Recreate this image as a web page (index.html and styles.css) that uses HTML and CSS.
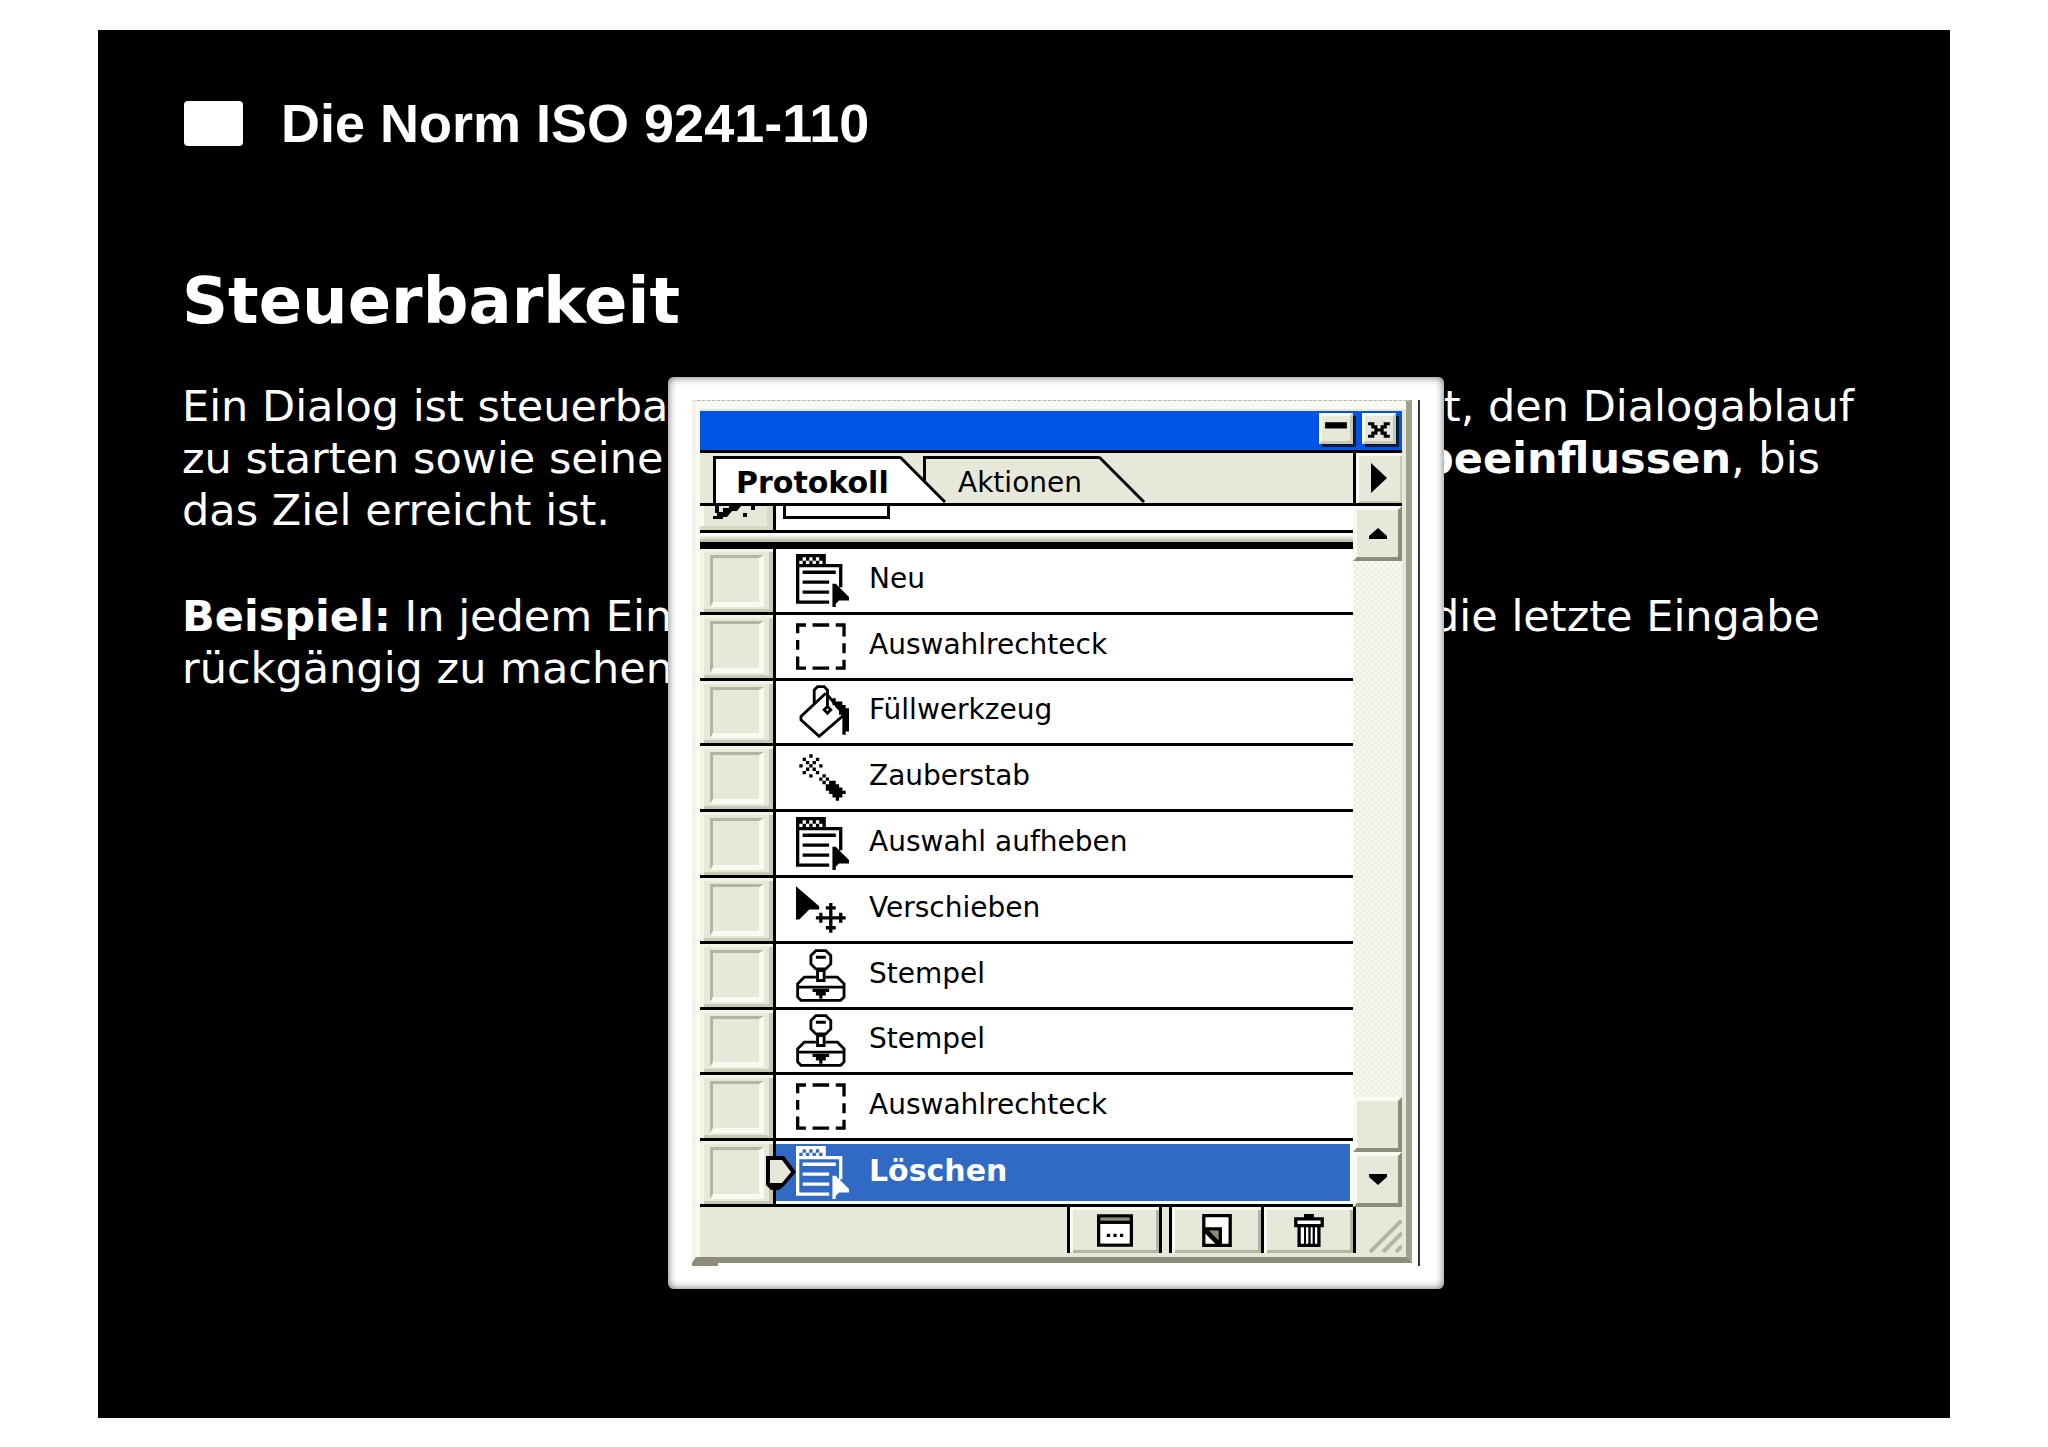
FILE: index.html
```html
<!DOCTYPE html>
<html lang="de">
<head>
<meta charset="utf-8">
<title>Die Norm ISO 9241-110</title>
<link rel="stylesheet" href="styles.css">
</head>
<body>
<svg class="sprites" aria-hidden="true">
  <symbol id="i-command" viewBox="0 0 16 16">
    <path fill="currentColor" fill-rule="evenodd" d="M0 0h9v3h5v7h-1V4H1v10h9v1H0zM2 1v1H1v1h1V2h1v1h1V2h1v1h1V2h1v1h1V2H7V1H6v1H5V1H4v1H3V1zM2 5h10v1H2zM2 8h8v1H2zM2 11h8v1H2zM11 9h1l4 4v1h-3l-1 1v1h-1z"/>
  </symbol>
  <symbol id="i-marquee" viewBox="0 0 16 16">
    <path fill="currentColor" d="M0 1h3v1H1v2H0zM5 1h5v1H5zM12 1h3v4h-1V2h-2zM0 6h1v3H0zM14 7h1v3h-1zM0 11h1v3h2v1H0zM5 14h5v1H5zM12 14h2v-2h1v3h-3z"/>
  </symbol>
  <symbol id="i-bucket" viewBox="0 0 16 16">
    <path fill="none" stroke="currentColor" stroke-width=".85" d="M5.500 5.500V1.500L6.500.500H8.500L9.500 1.500V7M9 2.500L1.500 9.500V10.500L7 15.500L14.500 9L9.500 3M9.500 6.500l1 1l-1 1l-1-1z"/>
    <path fill="currentColor" d="M11 4h1v1h2v1h1v1h1v7h-1v1h-1V9h-1V7h-1V6h-1z"/>
  </symbol>
  <symbol id="i-wand" viewBox="0 0 16 16">
    <path fill="currentColor" d="M4 1h1v1H4zM2 2h1v1H2zM6 2h1v1H6zM3 3h1v1H3zM5 3h1v1H5zM1 4h1v1H1zM4 4h1v1H4zM7 4h1v1H7zM3 5h1v1H3zM5 5h1v1H5zM2 6h1v1H2zM6 6h1v1H6zM4 7h1v1H4zM8 7h1v1H8zM7 8h1v1H7zM9 8h1v1H9zM8 9h1v1H8zM10 9h2v1h1v1h1v1h1v1h-1v1h-1v1h-1v-1h-1v-1h-1v-1H9v-2h1zM13 12h2v1h-2zM12 13h2v1h-2z"/>
  </symbol>
  <symbol id="i-move" viewBox="0 0 16 16">
    <path fill="currentColor" d="M0 1l7 6v1H4L1 11H0zM10 6h1v1h1v1h-1v2h2V9h1v1h1v1h-1v1h-1v-1h-2v2h1v1h-1v1h-1v-1H9v-1h1v-2H8v1H7v-1H6v-1h1V9h1v1h2V8H9V7h1z"/>
  </symbol>
  <symbol id="i-stamp" viewBox="0 0 16 16">
    <path fill="none" stroke="currentColor" stroke-width=".85" d="M6 .500H9L10.500 2V4.500L9 6H6L4.500 4.500V2zM6 2.500H9M6.500 6.500H8.500V9.500H6.500zM6 8.500H2.500L.500 10.500V14.500L1.500 15.500H13.500L14.500 14.500V10.500L12.500 8.500H9M.500 11.500H14.500"/>
    <path fill="currentColor" d="M5 12h5v1H9v1H8v1H7v-1H6v-1H5z"/>
  </symbol>
</svg>

<main class="slide">
  <header class="slide-header">
    <span class="bullet"></span>
    <h1 class="title">Die Norm ISO 9241-110</h1>
  </header>
  <h2 class="topic">Steuerbarkeit</h2>
  <div class="copy">
    <p>
      <span class="line"><span>Ein Dialog ist steuerbar</span> <span>ist, den Dialogablauf</span></span>
      <span class="line line-short"><span>zu starten sowie seine</span> <span><b>beeinflussen</b>, bis</span></span>
      <span class="line">das Ziel erreicht ist.</span>
    </p>
    <p>
      <span class="line line-short"><span><b>Beispiel:</b> In jedem Ein</span> <span>die letzte Eingabe</span></span>
      <span class="line">rückgängig zu machen</span>
    </p>
  </div>

  <section class="frame">
    <div class="capture">
      <div class="palette">
        <div class="titlebar">
          <button class="win-btn" type="button" aria-label="Minimieren"><svg viewBox="0 0 9 9" width="28" height="28"><path d="M1 2h7v2H1z"/></svg></button>
          <button class="win-btn" type="button" aria-label="Schließen"><svg viewBox="0 0 9 9" width="28" height="28"><path d="M1 2h2v1h1v1h1V3h1V2h2v1H7v1H6v1h1v1h1v1H6V6H5V5H4v1H3v1H1V6h1V5h1V4H2V3H1z"/></svg></button>
        </div>
        <div class="tabs" role="tablist">
          <button class="tab tab-active" type="button" role="tab" aria-selected="true">Protokoll</button>
          <svg class="slant slant-active" width="46" height="47" viewBox="0 0 46 47"><path class="slant-fill" d="M0 2L44 47H0z"/><path class="slant-line" d="M0 1L45 46"/></svg>
          <button class="tab tab-back" type="button" role="tab" aria-selected="false">Aktionen</button>
          <svg class="slant" width="46" height="47" viewBox="0 0 46 47"><path class="slant-line" d="M0 1L45 46"/></svg>
          <button class="menu-btn" type="button" aria-label="Palettenmenü"><svg width="16" height="30" viewBox="0 0 16 30"><path d="M0 0l16 15L0 30z"/></svg></button>
        </div>
        <div class="body">
          <div class="history">
            <div class="snapshot">
              <div class="brush"><svg width="44" height="14" viewBox="0 0 44 14"><path d="M2 0h4v6h4V2h6V0h12l-4 5h-5l-5 6h-4v2H0v-3h4V7H2zM38 0h4v4h-4zM30 7h4v4h-4z"/></svg></div>
              <div class="thumb-cell"><span class="thumb"></span></div>
            </div>
            <div class="divider"></div>
            <ol class="steps">
              <li class="step"><span class="well"><input type="checkbox" id="s1"></span><svg class="icon"><use href="#i-command"/></svg><label for="s1">Neu</label></li>
              <li class="step"><span class="well"><input type="checkbox" id="s2"></span><svg class="icon"><use href="#i-marquee"/></svg><label for="s2">Auswahlrechteck</label></li>
              <li class="step"><span class="well"><input type="checkbox" id="s3"></span><svg class="icon"><use href="#i-bucket"/></svg><label for="s3">Füllwerkzeug</label></li>
              <li class="step"><span class="well"><input type="checkbox" id="s4"></span><svg class="icon"><use href="#i-wand"/></svg><label for="s4">Zauberstab</label></li>
              <li class="step"><span class="well"><input type="checkbox" id="s5"></span><svg class="icon"><use href="#i-command"/></svg><label for="s5">Auswahl aufheben</label></li>
              <li class="step"><span class="well"><input type="checkbox" id="s6"></span><svg class="icon"><use href="#i-move"/></svg><label for="s6">Verschieben</label></li>
              <li class="step"><span class="well"><input type="checkbox" id="s7"></span><svg class="icon"><use href="#i-stamp"/></svg><label for="s7">Stempel</label></li>
              <li class="step"><span class="well"><input type="checkbox" id="s8"></span><svg class="icon"><use href="#i-stamp"/></svg><label for="s8">Stempel</label></li>
              <li class="step"><span class="well"><input type="checkbox" id="s9"></span><svg class="icon"><use href="#i-marquee"/></svg><label for="s9">Auswahlrechteck</label></li>
              <li class="step step-current"><span class="well"><input type="checkbox" id="s10"></span><svg class="icon"><use href="#i-command"/></svg><label for="s10">Löschen</label>
                <svg class="pointer" width="30" height="34" viewBox="0 0 30 34"><path d="M0 0h18l12 16l-12 14l-5 4H5L0 29z"/><path class="pointer-face" d="M4 4h12l9 12l-9 11H4z"/></svg></li>
            </ol>
          </div>
          <div class="scrollbar">
            <button class="scroll-btn" type="button" aria-label="Nach oben"><svg width="18" height="11" viewBox="0 0 18 11"><path d="M9 0l9 8v3H0V8z"/></svg></button>
            <div class="track"></div>
            <button class="scroll-btn" type="button" aria-label="Bildlauffeld"></button>
            <button class="scroll-btn" type="button" aria-label="Nach unten"><svg width="18" height="11" viewBox="0 0 18 11"><path d="M9 11l9-8V0H0v3z"/></svg></button>
          </div>
        </div>
        <div class="footer">
          <button class="tool tool-single" type="button" aria-label="Neues Dokument"><svg width="36" height="33" viewBox="0 0 11 10"><path d="M0 0h11v10H0z"/><path fill="#8c8c78" d="M1 1h9v1H1z"/><path fill="#fff" d="M1 3h9v6H1z"/><path d="M3 6h1v1H3zM5 6h1v1H5zM7 6h1v1H7z"/></svg></button>
          <button class="tool" type="button" aria-label="Neuer Schnappschuss"><svg width="30" height="33" viewBox="0 0 9 10"><path d="M0 0h9v10H0z"/><path fill="#fff" d="M1 1h7v8H6V4H1z"/><path fill="#8c8c78" d="M2 5h3v3z"/><path fill="#fff" d="M1 6l3 3H1z"/></svg></button>
          <button class="tool" type="button" aria-label="Löschen"><svg width="30" height="33" viewBox="0 0 9 10"><path d="M3 0h3v1h3v3H8v6H1V4H0V1h3z"/><path fill="#fff" d="M1 2h7v1H1zM2 4h1v5H2zM3.600 4h.7v5h-.7zM5 4h.6v5H5zM6.300 4h.7v5h-.7z"/></svg></button>
          <svg class="grip" width="33" height="33" viewBox="0 0 33 33"><path d="M1 32L33 0M14 32L33 13M27 32L33 26"/></svg>
        </div>
      </div>
      <div class="sliver"></div>
    </div>
  </section>
</main>
</body>
</html>
```
FILE: styles.css
```css
:root {
  --face: #e8e8da;
  --light: #fafaf0;
  --shade: #b4b4a0;
  --dark: #8c8c78;
}

* { box-sizing: border-box; }

body {
  margin: 0;
  padding: 30px 98px 29px;
  background: #fff;
  font-family: "DejaVu Sans", sans-serif;
}

button {
  padding: 0;
  border: 0;
  border-radius: 0;
  font: inherit;
  color: #000;
}

.sprites { display: none; }

.slide {
  position: relative;
  min-height: calc(100vh - 59px);
  padding: 57px 96px 56px 84px;
  background: #000;
  color: #fff;
}

.slide-header {
  display: flex;
  align-items: center;
  gap: 38px;
  padding-left: 2px;
}

.bullet {
  width: 59px;
  height: 45px;
  border-radius: 4px;
  background: #fff;
}

.title {
  margin: 0;
  font: bold 54px/72px "Liberation Sans", Arial, sans-serif;
}

.topic {
  margin: 104px 0 0;
  font-size: 64px;
  line-height: 76px;
}

.copy {
  margin-top: 41px;
  font-size: 43px;
  line-height: 52px;
  white-space: nowrap;
}

.copy p { margin: 0 0 54px; }

.line {
  display: flex;
  justify-content: space-between;
}

.line-short { padding-right: 34px; }

/* Framed capture lying over the slide text */
.frame {
  position: absolute;
  top: 347px;
  left: 570px;
  width: 776px;
  padding: 23px 24px 23px;
  border-radius: 6px;
  background: #fff;
  box-shadow: inset 0 0 8px #666;
  color: #000;
}

.capture {
  padding-right: 6px;
  border-right: 2px solid #333;
}

.sliver {
  width: 26px;
  height: 3px;
  background: var(--dark);
}

.palette {
  padding: 10px 4px 4px 4px;
  border-top: 1px dashed #b4b4b4;
  border-left: 4px solid #f2f1ea;
  border-right: 6px solid #a0a08c;
  border-bottom: 6px solid var(--dark);
  background: var(--face);
  box-shadow: inset 4px 8px 0 var(--light);
}

.titlebar {
  display: flex;
  justify-content: flex-end;
  gap: 9px;
  height: 42px;
  padding: 2px 6px 0 0;
  border-bottom: 3px solid #000;
  background: #0054e3;
}

.win-btn {
  display: grid;
  place-items: center;
  width: 34px;
  height: 31px;
  border: 3px solid;
  border-color: var(--light) #c8c8b4 #c8c8b4 var(--light);
  background: var(--face);
  box-shadow: 3px 3px 0 #001a40;
}

.tabs {
  display: flex;
  height: 53px;
  padding-left: 13px;
  border-bottom: 3px solid #000;
}

.tab {
  height: 47px;
  margin-top: 3px;
  padding-top: 4px;
  border: solid #000;
  border-width: 3px 0 0 3px;
  background: var(--face);
  font-size: 28px;
  line-height: 40px;
  text-align: left;
  white-space: nowrap;
}

.tab-active {
  width: 187px;
  padding-left: 20px;
  background: #fff;
  font-size: 30px;
  font-weight: bold;
}

.tab-back {
  width: 176px;
  margin-left: -23px;
  padding-left: 32px;
}

.slant { margin-top: 3px; }
.slant-active { position: relative; z-index: 1; }
.slant-fill { fill: #fff; }
.slant-line { stroke: #000; stroke-width: 3; }

.menu-btn {
  display: grid;
  place-items: center;
  width: 49px;
  margin-left: auto;
  border-left: 3px solid #000;
  background: var(--face);
  box-shadow: inset 3px 3px 0 var(--light), inset -2px -2px 0 #c8c8b4;
}

.body {
  display: grid;
  grid-template-columns: 1fr 49px;
}

.snapshot {
  display: grid;
  grid-template-columns: 76px 1fr;
  height: 27px;
  border-bottom: 3px solid #000;
  background: #fff;
}

.brush {
  padding-left: 13px;
  border-right: 3px solid #000;
  background: var(--face);
  box-shadow: inset -6px -4px 0 #d8d8c6, inset 4px 0 0 var(--light);
}

.brush svg { display: block; }

.thumb-cell { padding-left: 7px; }

.thumb {
  display: block;
  width: 107px;
  height: 13px;
  border: solid #000;
  border-width: 0 3px 3px;
}

.divider {
  height: 16px;
  border-bottom: 7px solid #000;
  background: linear-gradient(#fff 2px, #e8e8da 4px, #b4b4a0);
}

.steps {
  display: grid;
  grid-auto-rows: 1fr;
  height: 658px;
  margin: 0;
  padding: 0;
  list-style: none;
  background: #fff;
}

.step {
  position: relative;
  display: grid;
  grid-template-columns: 76px 53px 1fr;
  align-items: center;
  column-gap: 20px;
  border-bottom: 3px solid #000;
  font-size: 28px;
  line-height: 36px;
}

.step label { padding-bottom: 3px; }

.well {
  display: grid;
  align-self: stretch;
  padding: 6px 8px 5px 10px;
  border-right: 3px solid #000;
  background: var(--face);
  box-shadow: inset 4px 3px 0 #f4f4e6, inset -4px -3px 0 #c8c8b4;
}

.well input {
  appearance: none;
  width: 54px;
  margin: 0;
  border: solid;
  border-width: 3px 5px 5px 3px;
  border-color: var(--shade) var(--light) var(--light) var(--shade);
  background: var(--face);
}

.icon {
  width: 53px;
  height: 53px;
}

.step-current {
  color: #fff;
  font-size: 30px;
  font-weight: bold;
  background: linear-gradient(#316ac5, #316ac5) 76px 3px / calc(100% - 79px) calc(100% - 6px) no-repeat;
}

.pointer {
  position: absolute;
  left: 66px;
  top: 15px;
}

.pointer-face { fill: var(--face); }

.scrollbar {
  display: flex;
  flex-direction: column;
}

.scroll-btn {
  display: grid;
  place-items: center;
  height: 55px;
  border: solid;
  border-width: 4px;
  border-color: var(--light) var(--dark) var(--dark) var(--light);
  background: var(--face);
}

.track {
  flex: 1;
  background: repeating-conic-gradient(#f0eee4 0 25%, #f8f7f0 0 50%) 0 0 / 6px 6px;
}

.footer {
  display: flex;
  justify-content: flex-end;
  height: 46px;
}

.tool {
  display: grid;
  place-items: center;
  width: 92px;
  border-left: 3px solid #000;
  background: var(--face);
  box-shadow: inset 3px 3px 0 var(--light), inset -3px -3px 0 var(--shade);
}

.tool-single {
  width: 95px;
  margin-right: 7px;
  border-right: 3px solid #000;
}

.grip {
  width: 49px;
  padding: 13px 0 0 13px;
  height: 46px;
  border-left: 3px solid #000;
  fill: none;
  stroke: var(--shade);
  stroke-width: 4;
}
```
